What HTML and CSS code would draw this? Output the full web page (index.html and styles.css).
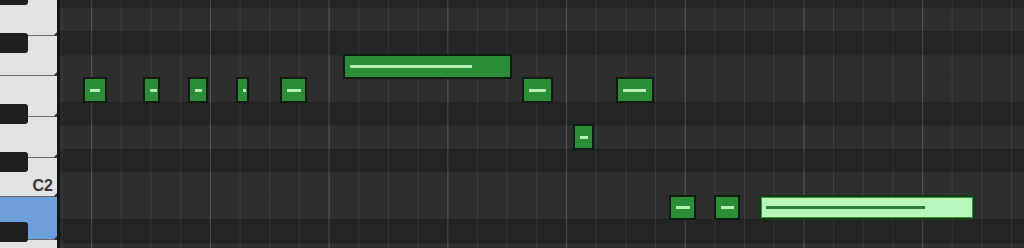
FILE: index.html
```html
<!DOCTYPE html>
<html lang="en">
<head>
    <meta charset="UTF-8">
    <meta name="viewport" content="width=device-width, initial-scale=1.0">
    <title>Piano Roll</title>
    <link rel="stylesheet" href="styles.css">
</head>
<body>
    <div class="roll">
        <div class="keys">
            <div class="white-key" style="height: 36px"></div>
            <div class="white-key" style="height: 40px"></div>
            <div class="white-key" style="height: 41px"></div>
            <div class="white-key" style="height: 41px"></div>
            <div class="white-key" style="height: 39px"><span class="key-label">C2</span></div>
            <div class="white-key active" style="height: 43px"></div>
            <div class="white-key" style="height: 20px"></div>

            <div class="black-key" style="top: -15px"></div>
            <div class="black-key" style="top: 33px"></div>
            <div class="black-key" style="top: 104px"></div>
            <div class="black-key" style="top: 152px"></div>
            <div class="black-key" style="top: 222px"></div>
        </div>

        <div class="grid">
            <div class="rows">
                <div class="row dark"></div>
                <div class="row"></div>
                <div class="row dark"></div>
                <div class="row">
                    <div class="note" style="left: 283px; width: 169px"><span class="vel" style="width: 122px"></span></div>
                </div>
                <div class="row">
                    <div class="note" style="left: 23px; width: 24px"><span class="vel" style="width: 10px"></span></div>
                    <div class="note" style="left: 83px; width: 17px"><span class="vel" style="width: 7px"></span></div>
                    <div class="note" style="left: 128px; width: 20px"><span class="vel" style="width: 7px"></span></div>
                    <div class="note" style="left: 176px; width: 13px"><span class="vel" style="width: 3px"></span></div>
                    <div class="note" style="left: 220px; width: 27px"><span class="vel" style="width: 14px"></span></div>
                    <div class="note" style="left: 462px; width: 31px"><span class="vel" style="width: 17px"></span></div>
                    <div class="note" style="left: 556px; width: 38px"><span class="vel" style="width: 23px"></span></div>
                </div>
                <div class="row dark"></div>
                <div class="row">
                    <div class="note" style="left: 513px; width: 21px"><span class="vel" style="width: 8px"></span></div>
                </div>
                <div class="row dark"></div>
                <div class="row"></div>
                <div class="row">
                    <div class="note" style="left: 609px; width: 27px"><span class="vel" style="width: 14px"></span></div>
                    <div class="note" style="left: 654px; width: 26px"><span class="vel" style="width: 13px"></span></div>
                    <div class="note selected" style="left: 699px; width: 216px"><span class="vel" style="width: 159px"></span></div>
                </div>
                <div class="row dark"></div>
                <div class="row"></div>
            </div>
        </div>
    </div>
</body>
</html>
```

FILE: styles.css
```css
body {
    margin: 0;
    background: #2d2d2d;
    overflow: hidden;
    font-family: "Liberation Sans", Arial, sans-serif;
}

.roll {
    display: flex;
    height: 248px;
    overflow: hidden;
}

/* keyboard */
.keys {
    position: relative;
    width: 57px;
    flex-shrink: 0;
    border-right: 3px solid #151515;
    display: flex;
    flex-direction: column;
    overflow: hidden;
    background: #e3e3e5;
}

.white-key {
    position: relative;
    flex-shrink: 0;
    box-sizing: border-box;
    border-bottom: 1px solid #6a6a6a;
    background: #e3e3e5;
    display: flex;
    justify-content: flex-end;
    align-items: flex-end;
}

.white-key::after {
    content: "";
    position: absolute;
    right: 0;
    bottom: -3px;
    border-top: 3px solid transparent;
    border-bottom: 3px solid transparent;
    border-right: 3px solid #3a3a3a;
}

.white-key.active {
    background: #6c9fdb;
}

.key-label {
    font-size: 16px;
    font-weight: bold;
    color: #363636;
    padding: 0 4px 2px 0;
    line-height: 1;
}

.black-key {
    position: absolute;
    left: 0;
    width: 28px;
    height: 20px;
    background: #1e1e1e;
    border-radius: 0 3px 3px 0;
    z-index: 2;
}

/* note grid */
.grid {
    position: relative;
    flex: 1;
    overflow: hidden;
    background-color: #2e2e2e;
    background-image:
        linear-gradient(to right, rgba(255, 255, 255, 0.14) 0 1px, transparent 1px),
        linear-gradient(to right, rgba(255, 255, 255, 0.08) 0 1px, transparent 1px);
    background-size: 118.72px 100%, 29.68px 100%;
    background-position: 31.2px 0, 31.2px 0;
}

.rows {
    margin-top: -15.75px;
    display: flex;
    flex-direction: column;
}

.row {
    position: relative;
    height: 23.5px;
    flex-shrink: 0;
    box-shadow: inset 0 1px 0 rgba(0, 0, 0, 0.07);
}

.row.dark {
    background: rgba(0, 0, 0, 0.2);
}

.note {
    position: absolute;
    top: -1px;
    bottom: -1px;
    box-sizing: border-box;
    border: 2px solid #0f1c10;
    background: #2b8e37;
    display: flex;
    align-items: center;
    padding-left: 5px;
    z-index: 1;
}

.vel {
    height: 3px;
    background: #b4efb4;
}

.note.selected {
    border-color: #143a18;
    background: #b9f6bc;
    box-shadow: inset 0 0 0 1px #3a9343;
}

.note.selected .vel {
    background: #2f7d38;
}
```
